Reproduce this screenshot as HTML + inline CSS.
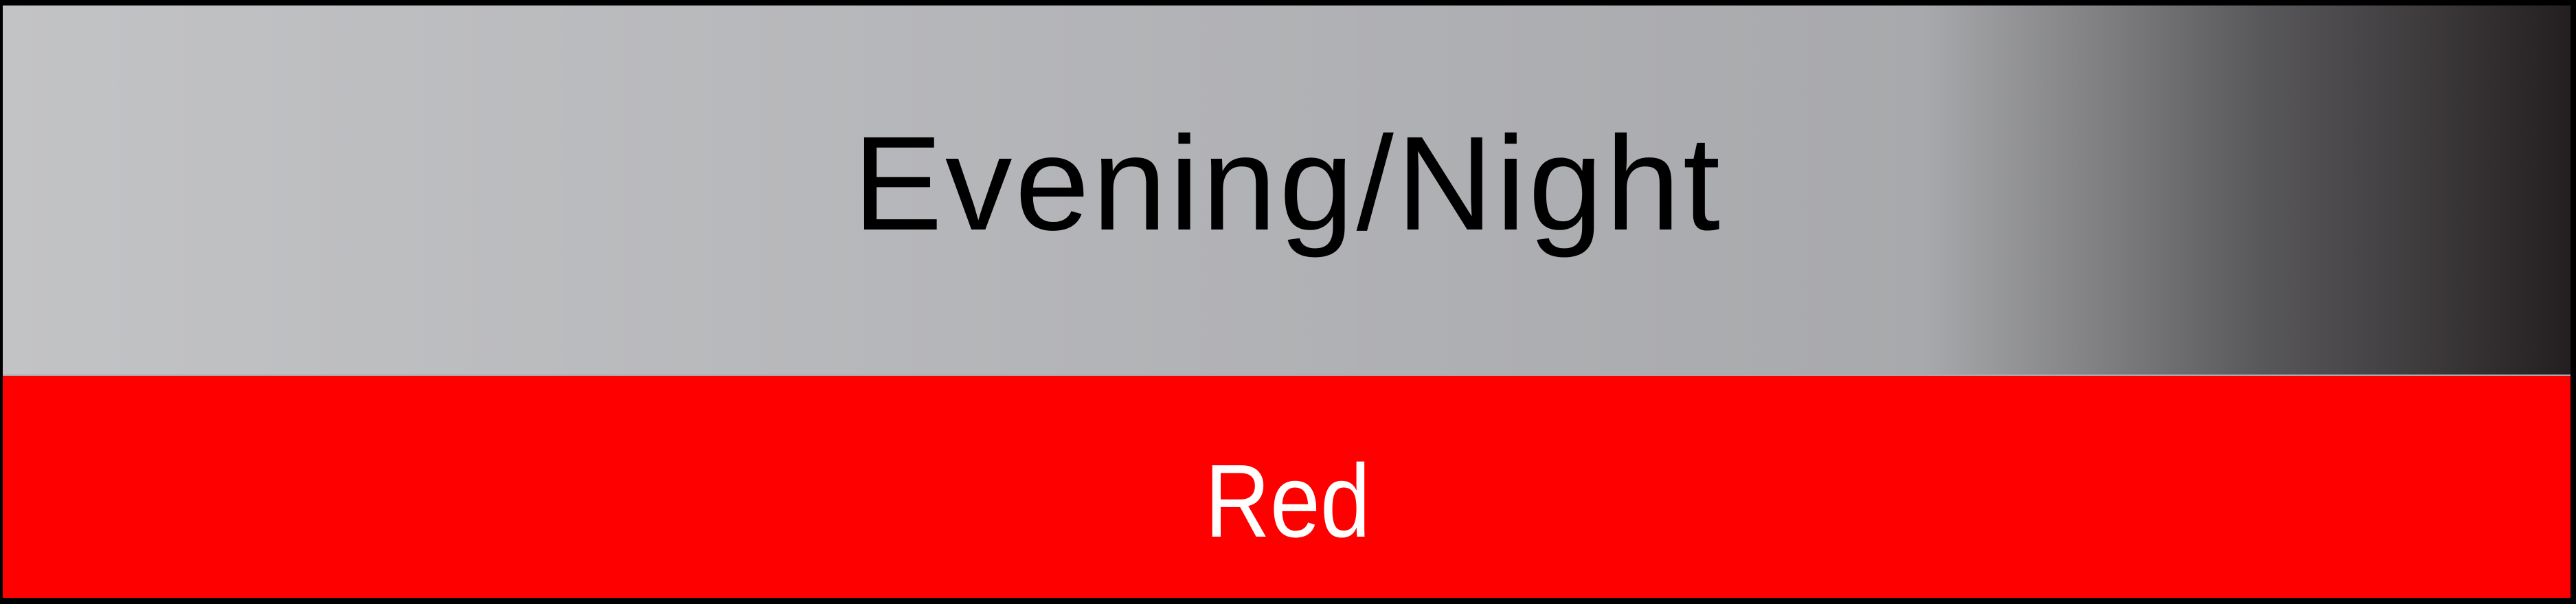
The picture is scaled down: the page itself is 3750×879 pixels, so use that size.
<!DOCTYPE html>
<html><head><meta charset="utf-8"><style>
html,body{margin:0;padding:0;}
body{width:3750px;height:879px;background:#000;position:relative;overflow:hidden;font-family:"Liberation Sans",sans-serif;}
.top{position:absolute;left:4px;top:8px;width:3738px;height:537px;
background:linear-gradient(to right,#c2c3c5 0%,#b4b5b8 40%,#a8a9ac 74.8%,#818183 81.5%,#58575a 88%,#3f3c3e 94%,#231f20 100%);}
.red{position:absolute;left:4px;top:545px;width:3738px;height:325px;background:#ff0000;border-top:2px solid #b0a8a8;box-sizing:border-box;}
.t1{position:absolute;left:0;width:3750px;text-align:center;top:170px;font-size:195px;line-height:195px;color:#000;letter-spacing:4px;white-space:nowrap;}
.t2{position:absolute;left:0;width:3750px;text-align:center;top:653px;font-size:151px;line-height:151px;color:#fff;white-space:nowrap;}
.t2 span{display:inline-block;transform:scaleX(0.87);}
</style></head><body>
<div class="top"></div>
<div class="red"></div>
<div class="t1">Evening/Night</div>
<div class="t2"><span>Red</span></div>
</body></html>
